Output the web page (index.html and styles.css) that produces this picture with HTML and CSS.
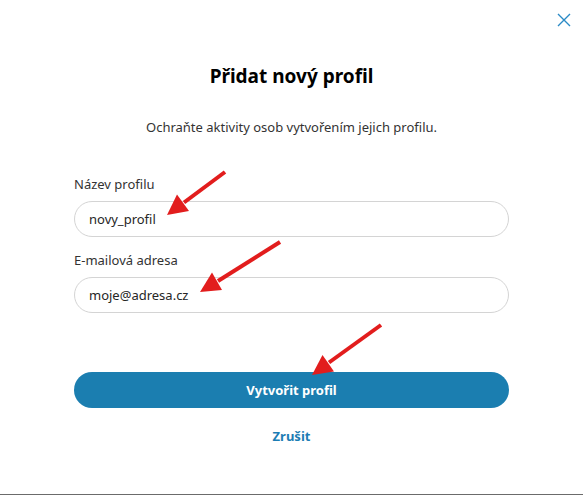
FILE: index.html
```html
<!DOCTYPE html>
<html lang="cs">
<head>
<meta charset="utf-8">
<title>Přidat nový profil</title>
<link rel="stylesheet" href="styles.css">
</head>
<body>
<div class="dialog">
  <div class="header">
    <button class="close" aria-label="Zavřít">
      <svg width="14" height="14" viewBox="0 0 14 14"><path d="M1 1 L13 13 M13 1 L1 13" stroke="#2a8ac6" stroke-width="1.4" fill="none"/></svg>
    </button>
  </div>
  <h1 class="title">Přidat nový profil</h1>
  <p class="subtitle">Ochraňte aktivity osob vytvořením jejich profilu.</p>
  <form class="form">
    <label class="label">Název profilu</label>
    <div class="input">novy_profil</div>
    <label class="label label-second">E-mailová adresa</label>
    <div class="input">moje@adresa.cz</div>
    <button type="button" class="primary">Vytvořit profil</button>
    <a class="cancel">Zrušit</a>
  </form>
</div>
<svg class="arrows" width="583" height="495" viewBox="0 0 583 495">
  <g fill="#e21d1d" stroke="#e21d1d">
    <line x1="225" y1="172" x2="184" y2="202.5" stroke-width="4"/>
    <polygon points="167,215 189,211 177,194.5" stroke="none"/>
    <line x1="280" y1="242" x2="218" y2="281" stroke-width="4"/>
    <polygon points="200,292 222,290 212,272.5" stroke="none"/>
    <line x1="381" y1="325" x2="329" y2="362.5" stroke-width="4"/>
    <polygon points="312,375 334,371.5 322.5,355" stroke="none"/>
  </g>
</svg>
</body>
</html>
```

FILE: styles.css
```css
html, body {
  margin: 0;
  padding: 0;
  background: #ffffff;
}
body {
  font-family: "Noto Sans", "Open Sans", "Liberation Sans", sans-serif;
  color: #262626;
  position: relative;
  width: 583px;
  height: 495px;
  overflow: hidden;
}
.dialog {
  box-sizing: border-box;
  height: 495px;
  border-bottom: 1px solid #6b6b6b;
  display: flex;
  flex-direction: column;
  align-items: center;
}
.header {
  align-self: stretch;
  display: flex;
  justify-content: flex-end;
  height: 64px;
}
.close {
  margin: 12px 11px 0 0;
  width: 16px;
  height: 16px;
  padding: 1px;
  border: 0;
  background: transparent;
  display: flex;
  align-items: flex-start;
  justify-content: center;
}
.title {
  margin: 0;
  font-size: 19px;
  line-height: 24px;
  font-weight: 700;
  color: #000;
}
.subtitle {
  margin: 30px 0 0;
  font-size: 13px;
  line-height: 18px;
  color: #333;
}
.form {
  width: 435px;
  display: flex;
  flex-direction: column;
  margin-top: 39px;
}
.label {
  font-size: 13px;
  line-height: 18px;
  color: #333;
  margin-bottom: 8px;
}
.label-second {
  margin-top: 14px;
}
.input {
  box-sizing: border-box;
  height: 36px;
  border: 1px solid #d4d4d4;
  border-radius: 18px;
  padding: 0 14px;
  display: flex;
  align-items: center;
  font-size: 13px;
  color: #262626;
}
.primary {
  margin-top: 59px;
  height: 36px;
  border: 0;
  border-radius: 18px;
  background: #1b7eb0;
  color: #fff;
  font-family: inherit;
  font-size: 13px;
  font-weight: 700;
}
.cancel {
  margin-top: 19px;
  align-self: center;
  font-size: 13px;
  line-height: 18px;
  font-weight: 700;
  color: #1c7db4;
}
.arrows {
  position: absolute;
  left: 0;
  top: 0;
  pointer-events: none;
}
```
